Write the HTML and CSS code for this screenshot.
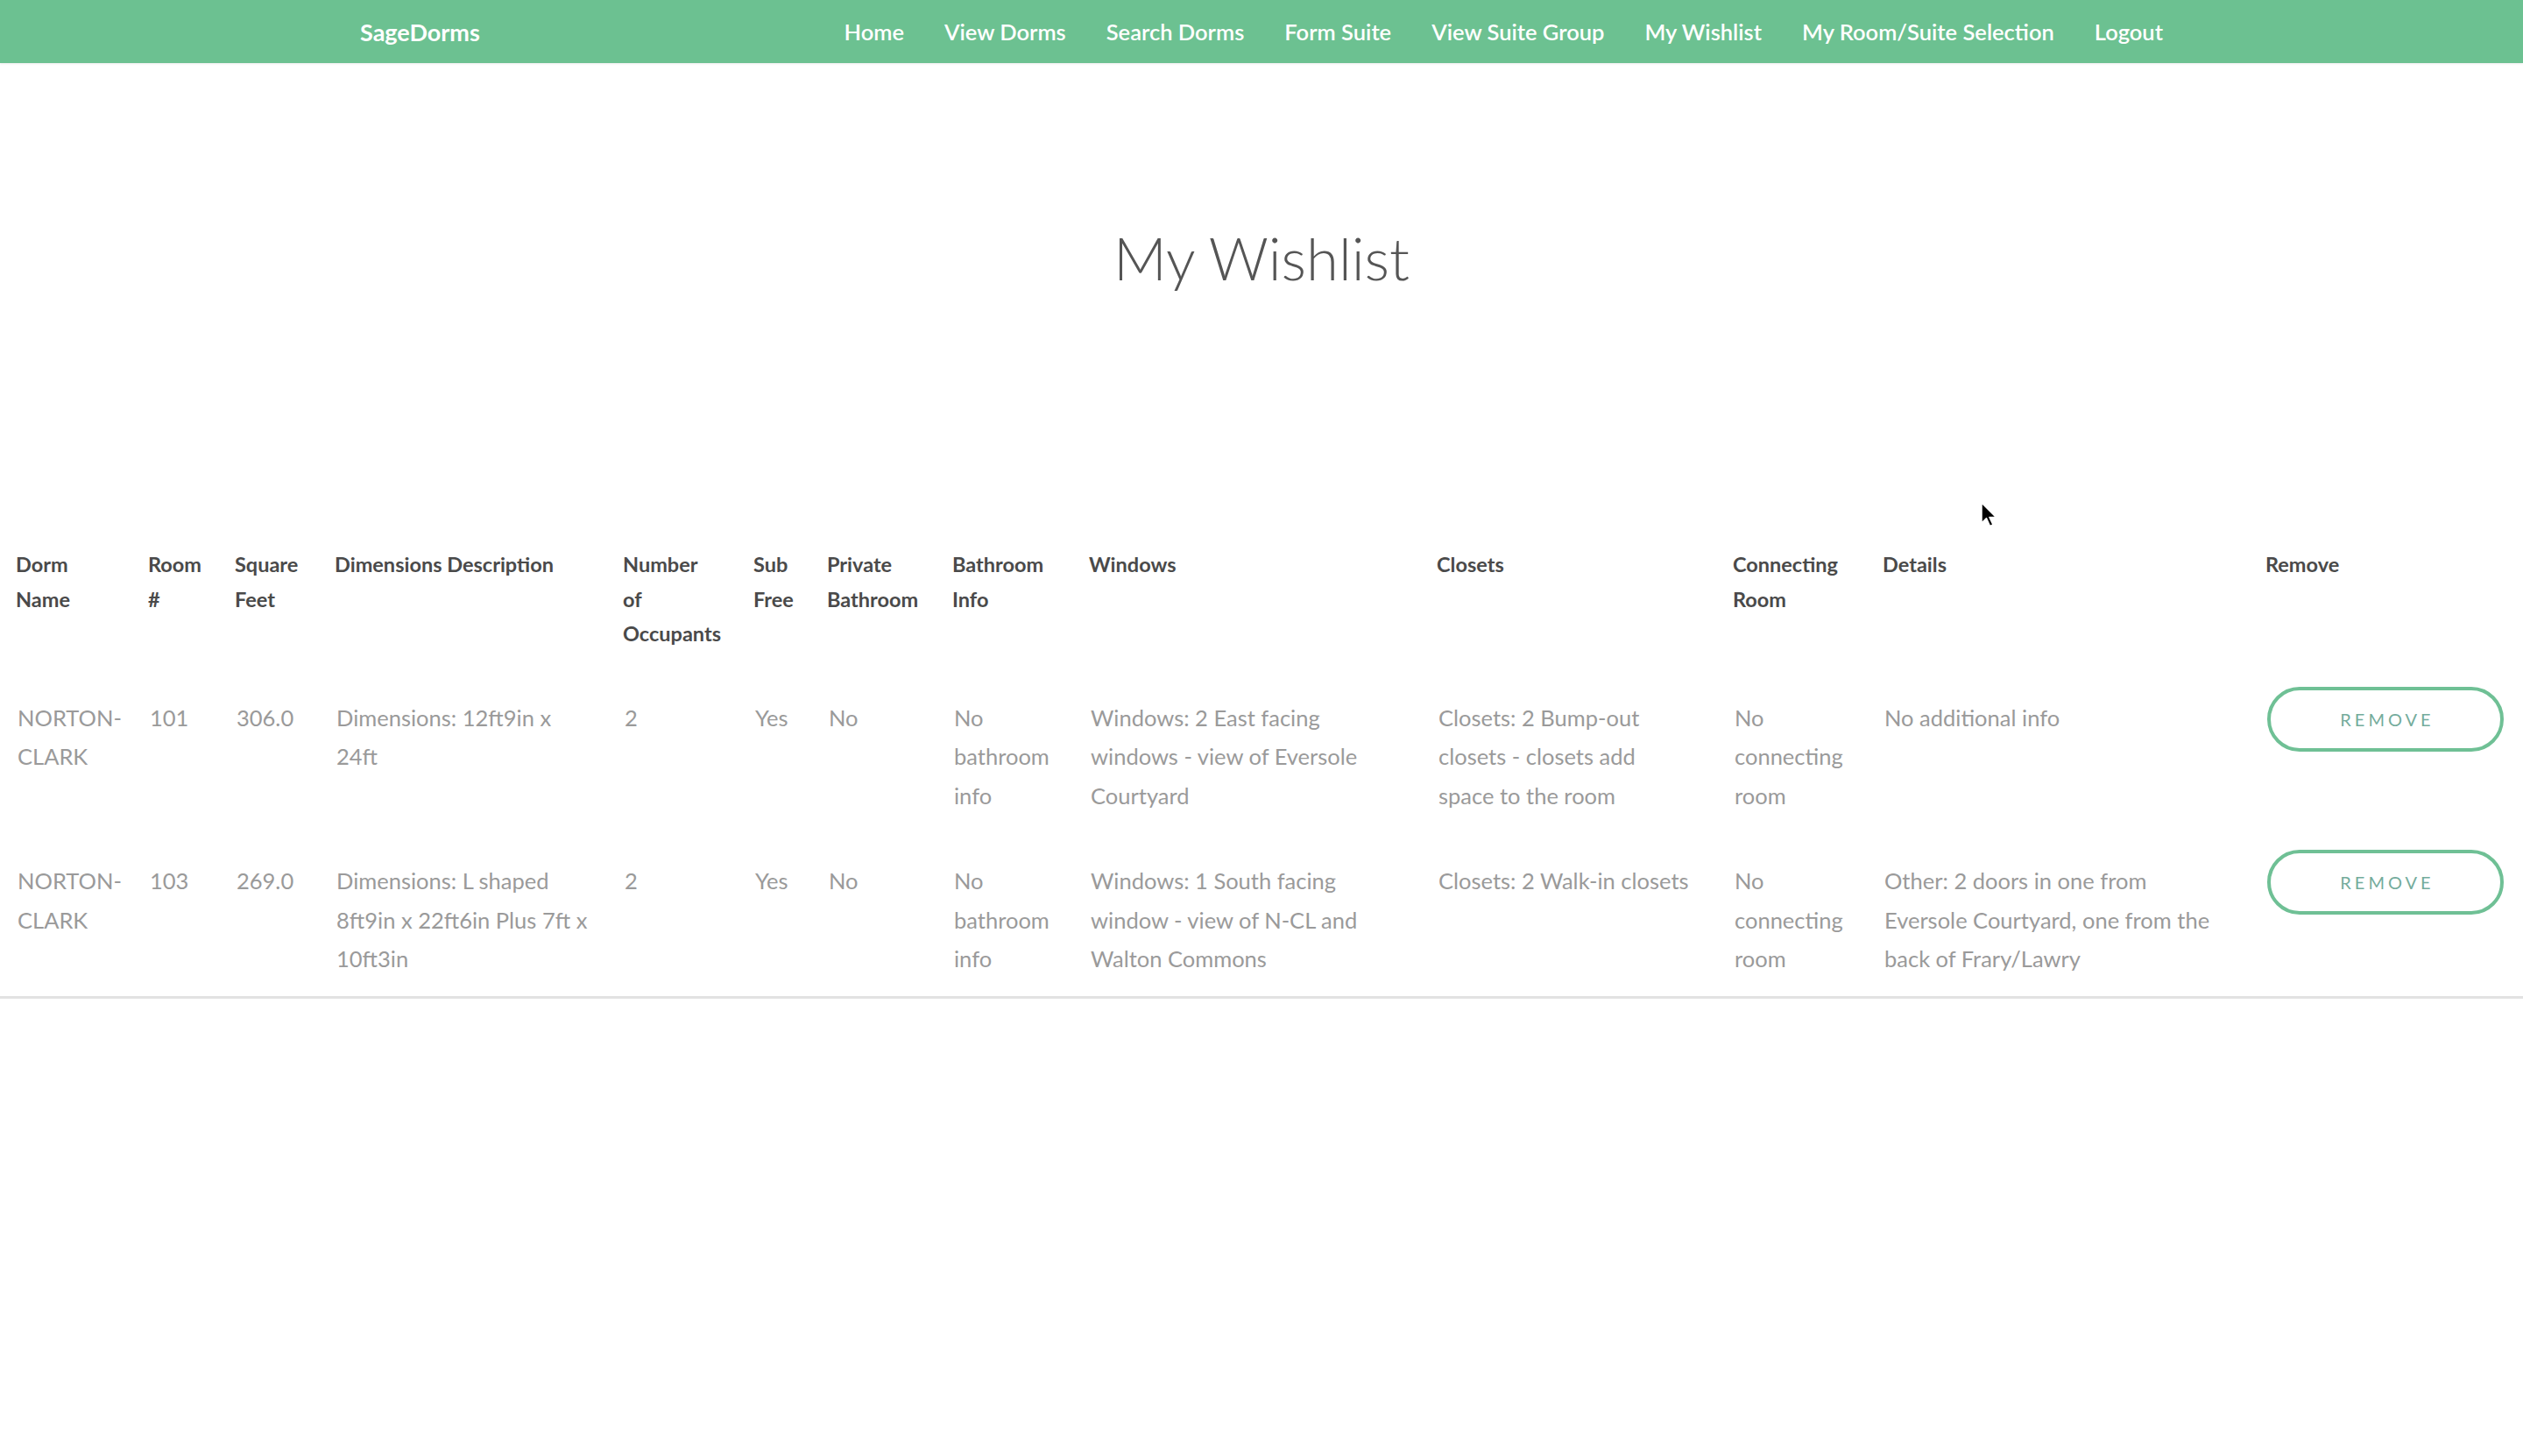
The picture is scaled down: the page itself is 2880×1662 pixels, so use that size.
FILE: index.html
```html
<!DOCTYPE html>
<html lang="en">
<head>
<meta charset="utf-8">
<title>My Wishlist - SageDorms</title>
<link rel="stylesheet" href="styles.css">
</head>
<body>
<nav class="topnav">
  <div class="nav-inner">
    <a class="brand" href="#">SageDorms</a>
    <ul class="nav-links">
      <li><a href="#">Home</a></li>
      <li><a href="#">View Dorms</a></li>
      <li><a href="#">Search Dorms</a></li>
      <li><a href="#">Form Suite</a></li>
      <li><a href="#">View Suite Group</a></li>
      <li><a href="#">My Wishlist</a></li>
      <li><a href="#">My Room/Suite Selection</a></li>
      <li><a href="#">Logout</a></li>
    </ul>
  </div>
</nav>

<main class="page">
  <h1 class="title">My Wishlist</h1>

  <table class="wishlist">
    <colgroup>
      <col class="c-dorm"><col class="c-room"><col class="c-sqft"><col class="c-dim">
      <col class="c-occ"><col class="c-sub"><col class="c-priv"><col class="c-bath">
      <col class="c-win"><col class="c-clo"><col class="c-conn"><col class="c-det">
      <col class="c-rem">
    </colgroup>
    <thead>
      <tr>
        <th>Dorm Name</th>
        <th>Room #</th>
        <th>Square Feet</th>
        <th>Dimensions Description</th>
        <th>Number of Occupants</th>
        <th>Sub Free</th>
        <th>Private Bathroom</th>
        <th>Bathroom Info</th>
        <th>Windows</th>
        <th>Closets</th>
        <th>Connecting Room</th>
        <th>Details</th>
        <th>Remove</th>
      </tr>
    </thead>
    <tbody>
      <tr>
        <td>NORTON-CLARK</td>
        <td>101</td>
        <td>306.0</td>
        <td class="dims">Dimensions: 12ft9in x 24ft</td>
        <td>2</td>
        <td>Yes</td>
        <td>No</td>
        <td>No bathroom info</td>
        <td>Windows: 2 East facing windows - view of Eversole Courtyard</td>
        <td class="closets">Closets: 2 Bump-out closets - closets add space to the room</td>
        <td>No connecting room</td>
        <td>No additional info</td>
        <td><button class="btn-remove" type="button">Remove</button></td>
      </tr>
      <tr>
        <td>NORTON-CLARK</td>
        <td>103</td>
        <td>269.0</td>
        <td class="dims">Dimensions: L shaped 8ft9in x 22ft6in Plus 7ft x 10ft3in</td>
        <td>2</td>
        <td>Yes</td>
        <td>No</td>
        <td>No bathroom info</td>
        <td>Windows: 1 South facing window - view of N-CL and Walton Commons</td>
        <td class="closets">Closets: 2 Walk-in closets</td>
        <td>No connecting room</td>
        <td>Other: 2 doors in one from Eversole Courtyard, one from the back of Frary/Lawry</td>
        <td><button class="btn-remove" type="button">Remove</button></td>
      </tr>
    </tbody>
  </table>
</main>

<svg class="cursor" width="20" height="30" viewBox="0 0 20 30" aria-hidden="true">
  <path d="M2 1 L2 24 L7.5 18.5 L11.5 27.5 L15 26 L11 17.5 L18.5 17.5 Z" fill="#000" stroke="#fff" stroke-width="1.5" stroke-linejoin="round"/>
</svg>
</body>
</html>
```

FILE: styles.css
```css
html, body {
  margin: 0;
  padding: 0;
  background: #ffffff;
}

body {
  font-family: Lato, "Open Sans", "Liberation Sans", sans-serif;
  color: #999999;
}

/* ---------- Top navigation ---------- */
.topnav {
  background: #6cc191;
  height: 72px;
  box-shadow: 0 1px 2px rgba(0, 0, 0, 0.08);
}

.nav-inner {
  width: 2058px;
  height: 72px;
  margin: 0 auto;
  display: flex;
  align-items: center;
  justify-content: space-between;
}

.brand {
  color: #ffffff;
  font-size: 27px;
  font-weight: 700;
  text-decoration: none;
}

.nav-links {
  list-style: none;
  margin: 0;
  padding: 0;
  display: flex;
  gap: 46px;
}

.nav-links a {
  color: #ffffff;
  font-size: 25.5px;
  font-weight: 600;
  text-decoration: none;
}

/* ---------- Title ---------- */
.title {
  margin: 178px 0 0;
  text-align: center;
  font-size: 67px;
  font-weight: 300;
  line-height: 89px;
  color: #555555;
}

/* ---------- Table ---------- */
.wishlist {
  width: 100%;
  margin-top: 266px;
  border-collapse: collapse;
  table-layout: fixed;
  border-bottom: 3px solid #e2e2e2;
}

.c-dorm { width: 151px; }
.c-room { width: 99px; }
.c-sqft { width: 114px; }
.c-dim  { width: 329px; }
.c-occ  { width: 149px; }
.c-sub  { width: 84px; }
.c-priv { width: 143px; }
.c-bath { width: 156px; }
.c-win  { width: 397px; }
.c-clo  { width: 338px; }
.c-conn { width: 171px; }
.c-det  { width: 437px; }
.c-rem  { width: 312px; }

.wishlist th,
.wishlist td {
  vertical-align: baseline;
  text-align: left;
  padding: 20px 26px 20px 18px;
}

.wishlist th {
  font-size: 23.5px;
  font-weight: 700;
  line-height: 39.6px;
  color: #4a4a4a;
}

.wishlist td {
  padding-left: 20px;
  font-size: 25.5px;
  line-height: 44.5px;
  color: #9a9a9a;
}

.wishlist td.dims {
  padding-right: 14px;
}

.wishlist td.closets {
  padding-right: 28px;
}

.btn-remove {
  box-sizing: border-box;
  width: 270px;
  height: 74px;
  padding: 0;
  border: 4px solid #6fc095;
  border-radius: 37px;
  background: #ffffff;
  color: #74ac9c;
  font-family: Lato, "Open Sans", "Liberation Sans", sans-serif;
  font-size: 20px;
  font-weight: 400;
  line-height: 66px;
  letter-spacing: 4px;
  text-transform: uppercase;
  text-indent: 4px;
  cursor: pointer;
}

/* mouse pointer captured in the screenshot, floating over the page */
.cursor {
  position: absolute;
  left: 2260px;
  top: 573px;
}
```
